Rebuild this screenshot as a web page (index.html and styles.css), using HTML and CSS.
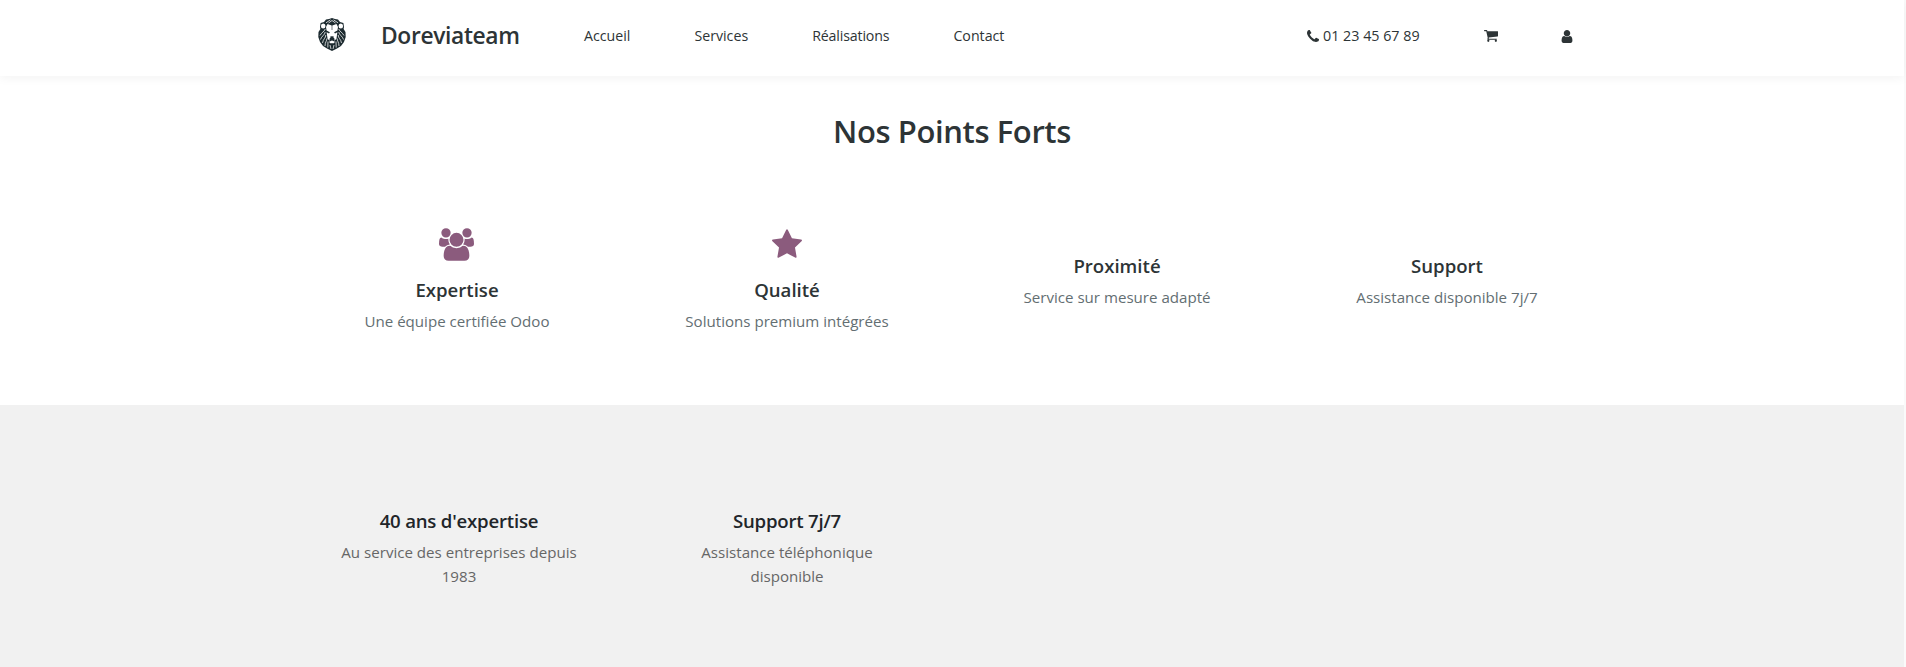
FILE: index.html
```html
<!DOCTYPE html>
<html lang="fr">
<head>
<meta charset="utf-8">
<title>Doreviateam</title>
<link rel="stylesheet" href="styles.css">
</head>
<body>
<div class="page">
  <header class="header">
    <svg class="logo" viewBox="0 0 28 33" aria-label="Lion">
      <path fill="#1d2b30" d="M14 0 17 1 20 1.6 22 4 25.4 5 26 9 25.6 11 27.5 14 27.7 19 26 24 23 28 19 30.5 14 33 9 30.5 5 28 2 24 .3 19 .5 14 2.400 11 2 9 2.600 5 6 4 8 1.600 11 1z"/>
      <g fill="#fff">
        <ellipse cx="5.200" cy="8" rx="2.300" ry="2.500"/>
        <ellipse cx="22.800" cy="8" rx="2.300" ry="2.500"/>
        <path d="M9.500 6 13.700 7.500V12L13.300 18.500 11.300 21 12 22.800 9.600 21 8.600 14.200 11 15.400 11.900 14.200 8.600 12.600 8 9z"/>
        <path d="M18.500 6 14.300 7.500V12L14.700 18.500 16.700 21 16 22.800 18.400 21 19.400 14.200 17 15.400 16.100 14.200 19.400 12.600 20 9z"/>
        <path d="M12.700 12h2.600l.4 6.500h-3.400z"/>
        <path d="M11 23.700 14 22.600 17 23.700 15.800 25.300H12.200z"/>
      </g>
      <g fill="none" stroke="#fff" stroke-width=".75">
        <path d="M8 4.800 12.500 1.800M10.500 5 14 2.500 17.500 5M20 4.800 15.500 1.800M7.300 11C6 14 4 14 2 17.500M7.200 14C7 17 3.500 18 2.500 21.500M7.800 17C8 20 5 21 4.500 25M8.800 20.500C9 23 7 24 7 28M10 23.500 9.800 29.500M20.700 11C22 14 24 14 26 17.500M20.800 14C21 17 24.500 18 25.500 21.500M20.200 17C20 20 23 21 23.500 25M19.200 20.500C19 23 21 24 21 28M18 23.500 18.200 29.500M12 27 13 31M16 27 15 31"/>
      </g>
      <path d="M12 18.500h4L14 21z" fill="#1d2b30"/>
    </svg>
    <a class="brand">Doreviateam</a>
    <nav class="menu">
      <a>Accueil</a>
      <a>Services</a>
      <a class="menu-wide">Réalisations</a>
      <a>Contact</a>
    </nav>
    <div class="tools">
      <a class="phone"><svg class="phone-icon" viewBox="0 128 1408 1408"><path d="M1408 1240q0 27-10 70.500t-21 68.500q-21 50-122 106-94 51-186 51-27 0-53-3.500t-57.500-12.500-47-14.500-55.500-20.500-49-18q-98-35-175-83-127-79-264-216t-216-264q-48-77-83-175-3-9-18-49t-20.500-55.500-14.500-47-12.500-57.500-3.500-53q0-92 51-186 56-101 106-122 25-11 68.500-21t70.500-10q14 0 21 3 18 6 53 76 11 19 30 54t35 63.500 31 53.500q3 4 17.500 25t21.500 35.500 7 28.500q0 20-28.500 50t-62 55-62 53-28.500 46q0 9 5 22.500t8.500 20.500 14 24 11.500 19q76 137 174 235t235 174q2 1 19 11.500t24 14 20.500 8.500 22.500 5q18 0 46-28.500t53-62 55-62 50-28.500q14 0 28.500 7t35.500 21.500 25 17.500q25 15 53.500 31t63.500 35 54 30q70 35 76 53 3 7 3 21z"/></svg>01 23 45 67 89</a>
      <svg class="cart-icon" viewBox="0 256 1664 1408"><path d="M640 1536q0 52-38 90t-90 38-90-38-38-90 38-90 90-38 90 38 38 90zm896 0q0 52-38 90t-90 38-90-38-38-90 38-90 90-38 90 38 38 90zm128-1088v512q0 24-16.500 42.500t-40.500 21.500l-1044 122q13 60 13 70 0 16-24 64h920q26 0 45 19t19 45-19 45-45 19h-1024q-26 0-45-19t-19-45q0-11 8-31.500t16-36 21.500-40 15.500-29.500l-177-823h-204q-26 0-45-19t-19-45 19-45 45-19h256q16 0 28.500 6.500t19.500 15.500 13 24.500 8 26 5.500 29.500 4.500 26h1201q26 0 45 19t19 45z"/></svg>
      <svg class="user-icon" viewBox="0 128 1280 1536"><path d="M1280 1399q0 109-62.500 187t-150.500 78h-854q-88 0-150.500-78t-62.500-187q0-85 8.500-160.500t31.500-152 58.500-131 94-89 134.500-34.500q131 128 313 128t313-128q76 0 134.500 34.500t94 89 58.500 131 31.500 152 8.500 160.500zm-256-887q0 159-112.500 271.500t-271.500 112.500-271.500-112.500-112.500-271.500 112.500-271.500 271.500-112.500 271.500 112.500 112.500 271.500z"/></svg>
    </div>
  </header>
  <section class="strengths">
    <h2 class="title">Nos Points Forts</h2>
    <div class="grid">
      <div class="card">
        <div class="card-icon"><svg class="users-icon" viewBox="0 0 1920 1792"><path d="M593 896q-162 5-265 128h-134q-82 0-138-40.500t-56-118.500q0-353 124-353 6 0 43.500 21t97.500 42.500 119 21.500q67 0 133-23-5 37-5 66 0 139 81 256zm1071 637q0 120-73 189.500t-194 69.500h-874q-121 0-194-69.500t-73-189.500q0-53 3.500-103.500t14-109 26.500-108.500 43-97.500 62-81 85.500-53.500 111.500-20q10 0 43 21.500t73 48 107 48 135 21.500 135-21.500 107-48 73-48 43-21.500q61 0 111.500 20t85.500 53.500 62 81 43 97.500 26.500 108.500 14 109 3.500 103.500zm-1024-1277q0 106-75 181t-181 75-181-75-75-181 75-181 181-75 181 75 75 181zm704 384q0 159-112.500 271.500t-271.500 112.500-271.500-112.500-112.500-271.500 112.500-271.500 271.500-112.500 271.500 112.500 112.500 271.500zm576 225q0 78-56 118.500t-138 40.500h-134q-103-123-265-128 81-117 81-256 0-29-5-66 66 23 133 23 59 0 119-21.500t97.500-42.500 43.500-21q124 0 124 353zm-128-609q0 106-75 181t-181 75-181-75-75-181 75-181 181-75 181 75 75 181z"/></svg></div>
        <h3>Expertise</h3>
        <p>Une équipe certifiée Odoo</p>
      </div>
      <div class="card">
        <div class="card-icon"><svg class="star-icon" viewBox="0 32 1664 1587"><path d="M1664 647q0 22-26 48l-363 354 86 500q1 7 1 20 0 21-10.500 35.500t-30.500 14.500q-19 0-40-12l-449-236-449 236q-22 12-40 12-21 0-31.500-14.500t-10.500-35.500q0-6 2-20l86-500-364-354q-25-27-25-48 0-37 56-46l502-73 225-455q19-41 49-41t49 41l225 455 502 73q56 9 56 46z"/></svg></div>
        <h3>Qualité</h3>
        <p>Solutions premium intégrées</p>
      </div>
      <div class="card">
        <div class="card-icon card-icon-empty"></div>
        <h3>Proximité</h3>
        <p>Service sur mesure adapté</p>
      </div>
      <div class="card">
        <div class="card-icon card-icon-empty"></div>
        <h3>Support</h3>
        <p>Assistance disponible 7j/7</p>
      </div>
    </div>
  </section>
  <section class="facts">
    <div class="card">
      <h3>40 ans d'expertise</h3>
      <p>Au service des entreprises depuis 1983</p>
    </div>
    <div class="card">
      <h3>Support 7j/7</h3>
      <p>Assistance téléphonique disponible</p>
    </div>
  </section>
</div>
</body>
</html>
```
FILE: styles.css
```css
* { box-sizing: border-box; }
body {
  margin: 0;
  background: #fafafa;
  font-family: "Open Sans", "Noto Sans", sans-serif;
  font-size: 15.1px;
  line-height: 24px;
  color: #2d3436;
  overflow: hidden;
}
h2, h3, p { margin: 0; }
svg { display: block; flex: none; fill: #2d3436; }

.page {
  width: 1904px;
  height: 667px;
  display: flex;
  flex-direction: column;
  background: #fff;
}

.header {
  height: 76px;
  flex: none;
  display: flex;
  align-items: flex-start;
  padding: 18px 331px 0 318px;
  background: #fff;
  box-shadow: 0 2px 10px rgba(0, 0, 0, .05);
}
.logo { width: 28px; height: 33px; }
.brand {
  margin-left: 35px;
  padding-top: 6px;
  width: 139px;
  font-size: 22.8px;
  font-weight: 600;
  letter-spacing: -.35px;
  white-space: nowrap;
}
.menu {
  display: flex;
  gap: 64px;
  margin-left: 64px;
  padding-top: 6px;
  font-size: 14.2px;
}
.menu-wide { letter-spacing: -.15px; }
.tools {
  display: flex;
  align-items: center;
  margin-left: auto;
  padding-top: 6px;
  font-size: 14.3px;
}
.phone { display: flex; align-items: center; gap: 4px; width: 177px; }
.phone-icon { width: 12px; height: 12px; }
.cart-icon { width: 14px; height: 12px; margin-right: 63px; }
.user-icon { width: 12px; height: 13px; }

.strengths { height: 329px; flex: none; padding: 36px 292px 0; }
.title {
  text-align: center;
  font-size: 31px;
  font-weight: 600;
  letter-spacing: -.4px;
  line-height: 38px;
}
.grid {
  display: grid;
  grid-template-columns: repeat(4, 330px);
  margin-top: 78px;
}
.card { padding: 0 38px; text-align: center; }
.card h3 { font-size: 18.6px; font-weight: 600; line-height: 24px; }
.card p { margin-top: 7px; white-space: nowrap; color: #636e72; }
.card-icon { display: flex; justify-content: center; height: 50px; }
.card-icon svg { fill: #8b5b7d; }
.card-icon-empty { height: 26px; }
.users-icon { width: 35px; height: 33px; margin-right: 1px; }
.star-icon { width: 30px; height: 29px; margin-top: 1px; }

.facts {
  flex: 1;
  display: grid;
  grid-template-columns: repeat(4, 328px);
  padding: 104px 0 0 295px;
  background: #f1f1f1;
}
.facts .card { padding: 0 44px; }
.facts h3 { letter-spacing: -.2px; color: #212529; }
.facts p { white-space: normal; color: #666; }
```
